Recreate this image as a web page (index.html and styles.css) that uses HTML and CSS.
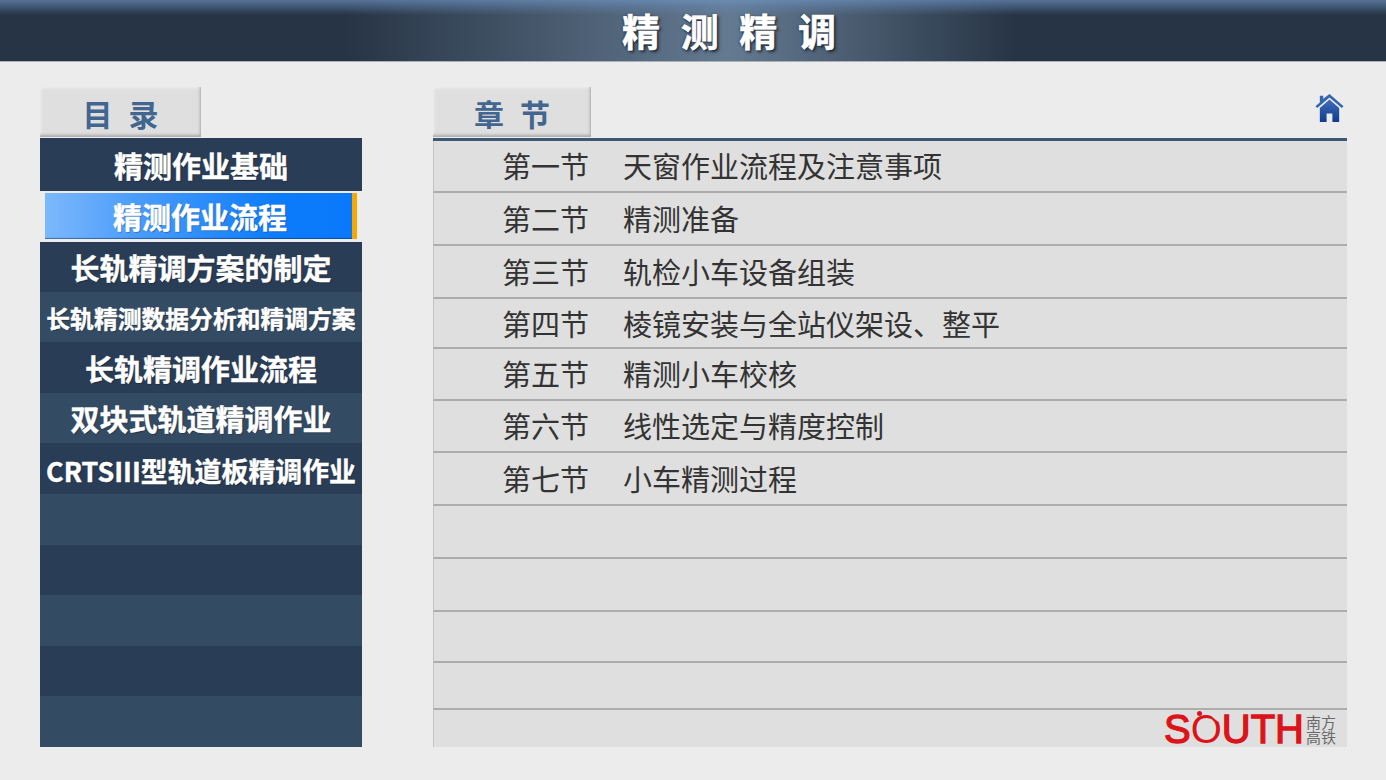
FILE: index.html
```html
<!DOCTYPE html>
<html lang="zh">
<head>
<meta charset="utf-8">
<title>精测精调</title>
<link rel="stylesheet" href="styles.css">
</head>
<body>
<header class="top"><h1 class="top-title">精 测 精 调</h1></header>
<main class="main">
  <section class="side">
    <div class="tab side-tab">目 录</div>
    <ul class="menu">
      <li class="m m1 dark">精测作业基础</li>
      <li class="m m2 active">精测作业流程</li>
      <li class="m m3 dark">长轨精调方案的制定</li>
      <li class="m m4 light small">长轨精测数据分析和精调方案</li>
      <li class="m m5 dark">长轨精调作业流程</li>
      <li class="m m4 light">双块式轨道精调作业</li>
      <li class="m m5 dark mid">CRTSIII型轨道板精调作业</li>
      <li class="m m5 light"></li>
      <li class="m m4 dark"></li>
      <li class="m m5 light"></li>
      <li class="m m4 dark"></li>
      <li class="m m5 light"></li>
    </ul>
  </section>
  <section class="content">
    <div class="content-head">
      <div class="tab content-tab">章 节</div>
      <svg class="home" viewBox="0 0 30 30" preserveAspectRatio="none" aria-label="home">
        <defs><linearGradient id="hg" x1="0" y1="0" x2="0" y2="1"><stop offset="0" stop-color="#3f6db8"/><stop offset="1" stop-color="#103c8c"/></linearGradient></defs>
        <path fill="#3464ae" d="M5 2h3.500v3L15 0l14.500 13-1.800 2L15 3.700 2.300 15 .5 13 5 9z"/>
        <path fill="url(#hg)" d="M15 6l10 9v15h-7v-9h-6v9H5V15z"/>
      </svg>
    </div>
    <ol class="rows">
      <li class="r h52 upper"><span class="no">第一节</span><span class="nm">天窗作业流程及注意事项</span></li>
      <li class="r h53 upper"><span class="no">第二节</span><span class="nm">精测准备</span></li>
      <li class="r h53 upper"><span class="no">第三节</span><span class="nm">轨检小车设备组装</span></li>
      <li class="r h50"><span class="no">第四节</span><span class="nm">棱镜安装与全站仪架设、整平</span></li>
      <li class="r h52 upper"><span class="no">第五节</span><span class="nm">精测小车校核</span></li>
      <li class="r h52 upper"><span class="no">第六节</span><span class="nm">线性选定与精度控制</span></li>
      <li class="r h53 upper"><span class="no">第七节</span><span class="nm">小车精测过程</span></li>
      <li class="r h53"></li>
      <li class="r h53"></li>
      <li class="r h51"></li>
      <li class="r h47"></li>
      <li class="r last">
        <div class="logo"><span class="logo-en">S<span class="logo-o">O</span>UTH</span><span class="logo-cn"><span class="logo-line">南方</span><span class="logo-line">高铁</span></span></div>
      </li>
    </ol>
  </section>
</main>
</body>
</html>
```
FILE: styles.css
```css
* { box-sizing: border-box; }
html, body { margin: 0; padding: 0; }
body {
  width: 1386px;
  height: 780px;
  overflow: hidden;
  background: #ececec;
  font-family: "Noto Sans CJK SC", "Liberation Sans", sans-serif;
}
.top {
  height: 62px;
  border-bottom: 1px solid #aab0b8;
  display: flex;
  justify-content: center;
  align-items: flex-start;
  padding-left: 72px;
  background:
    linear-gradient(180deg, rgba(112,150,198,.62) 0, rgba(100,136,180,.45) 6px, rgba(80,110,150,0) 15px),
    linear-gradient(90deg, #273445 0, #273445 345px, #647a91 730px, #273445 1015px, #273445 100%);
}
.top-title {
  margin: 0;
  font-size: 38px;
  line-height: 60px;
  font-weight: 700;
  color: #fff;
  word-spacing: 12px;
  -webkit-text-stroke: .6px #fff;
  text-shadow: 1px 1px 1px #24303e, 2px 2px 3px rgba(20,28,38,.8), -1px 0 2px rgba(20,28,38,.5);
}
.main {
  display: flex;
  align-items: flex-start;
  padding: 25px 39px 0 40px;
  gap: 71px;
}
.side { width: 322px; flex: none; }
.tab {
  height: 50px;
  background: #dfdfdf;
  box-shadow: inset -2px -3px 3px -1px #a9a9a9, inset 1px 1px 3px rgba(255,255,255,.5);
  color: #426690;
  font-size: 30px;
  font-weight: 700;
  line-height: 52px;
  text-align: center;
  white-space: pre;
  word-spacing: 9px;
}
.side-tab { width: 161px; margin-bottom: 1px; }
.menu { list-style: none; margin: 0; padding: 0; }
.m {
  display: flex;
  align-items: center;
  justify-content: center;
  color: #fff;
  font-size: 29px;
  font-weight: 700;
  white-space: nowrap;
  -webkit-text-stroke: .4px #fff;
  text-shadow: 1px 1px 1px rgba(0,0,0,.3);
}
.dark { background: #2a3d56; }
.light { background: #344b64; }
.m1 { height: 53px; margin-bottom: 2px; }
.m2 { height: 46px; margin: 0 5px 3px; padding-left: 3px; }
.m3 { height: 50px; }
.m4 { height: 50px; }
.m5 { height: 51px; }
.small { font-size: 23.800px; }
.mid { font-size: 26.900px; padding-top: 3px; }
.active {
  background: linear-gradient(90deg, #7db8fb 0, #4a9cfb 30%, #0d7cfb 75%, #0a78fa 100%);
  border-right: 5px solid #f5a800;
  box-shadow: inset 0 -2px 1px -1px rgba(0,40,100,.5);
}
.content { width: 914px; flex: none; }
.content-head {
  display: flex;
  justify-content: space-between;
  align-items: flex-start;
  height: 54px;
  border-bottom: 3px solid #3c5875;
}
.content-tab { width: 158px; }
.home { width: 29px; height: 28px; margin: 7px 3px 0 0; }
.rows { list-style: none; margin: 0; padding: 0; }
.r {
  display: flex;
  align-items: center;
  background: #dfdfdf;
  border-left: 1px solid #c4c4c4;
  border-bottom: 2px solid #adadad;
  color: #333;
  font-size: 29px;
  white-space: nowrap;
}
.no { width: 121px; margin-left: 68px; }
.h52 { height: 52px; }
.h53 { height: 53px; }
.h50 { height: 50px; }
.h51 { height: 51px; }
.h47 { height: 47px; }
.upper { padding-bottom: 2px; }
.last { height: 37px; border-bottom: 0; justify-content: flex-end; align-items: flex-start; }
.logo { display: flex; align-items: center; height: 37px; padding: 1px 11px 0 0; }
.logo-en {
  font-family: "Liberation Sans", sans-serif;
  font-weight: 400;
  font-size: 40px;
  line-height: 37px;
  color: #dc1318;
  -webkit-text-stroke: 1.300px #dc1318;
}
.logo-o {
  position: relative;
  -webkit-text-stroke: 0;
}
.logo-o::before {
  content: "";
  position: absolute;
  left: 6px;
  top: 4px;
  width: 5px;
  height: 5px;
  border-radius: 50%;
  background: #dc1318;
}
.logo-o::after {
  content: "";
  position: absolute;
  right: 2px;
  top: 8px;
  width: 12px;
  height: 3px;
  background: #dfdfdf;
  transform: rotate(40deg);
}
.logo-cn {
  font-size: 15px;
  line-height: 15px;
  color: #6a6a6a;
  margin-left: 2px;
  white-space: nowrap;
}
.logo-line { display: block; height: 15px; }
```
